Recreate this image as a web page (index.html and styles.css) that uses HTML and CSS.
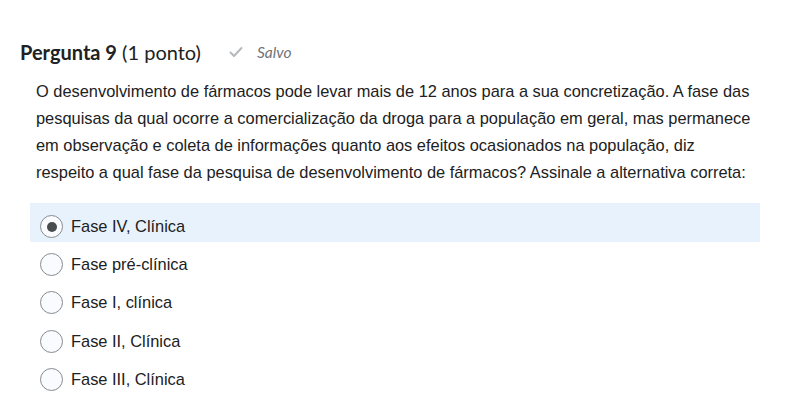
FILE: index.html
```html
<!DOCTYPE html>
<html lang="pt">
<head>
<meta charset="utf-8">
<link rel="stylesheet" href="styles.css">
</head>
<body>
<div class="question">
  <div class="q-header">
    <h2 class="q-title"><strong>Pergunta 9</strong> <span class="pts">(1 ponto)</span></h2>
    <span class="saved">
      <svg class="check" width="14" height="12" viewBox="0 0 14 12"><path d="M1.5 6.5 L5 10 L12.5 2" fill="none" stroke="#b5b9bc" stroke-width="2" stroke-linecap="round" stroke-linejoin="round"/></svg>
      <em>Salvo</em>
    </span>
  </div>
  <p class="q-text">O desenvolvimento de fármacos pode levar mais de 12 anos para a sua concretização. A fase das pesquisas da qual ocorre a comercialização da droga para a população em geral, mas permanece em observação e coleta de informações quanto aos efeitos ocasionados na população, diz respeito a qual fase da pesquisa de desenvolvimento de fármacos? Assinale a alternativa correta:</p>
  <div class="options">
    <label class="opt selected"><span class="radio checked"></span><span>Fase IV, Clínica</span></label>
    <label class="opt"><span class="radio"></span><span>Fase pré-clínica</span></label>
    <label class="opt"><span class="radio"></span><span>Fase I, clínica</span></label>
    <label class="opt"><span class="radio"></span><span>Fase II, Clínica</span></label>
    <label class="opt"><span class="radio"></span><span>Fase III, Clínica</span></label>
  </div>
</div>
</body>
</html>
```
FILE: styles.css
```css
html, body { margin: 0; padding: 0; background: #fff; }
body { font-family: "Liberation Sans", Arial, sans-serif; color: #202122; }
.question { padding: 39px 0 0 20px; width: 740px; }
.q-header { display: flex; align-items: center; height: 26px; }
.q-title { margin: 0; font-family: Lato, "Noto Sans", sans-serif; font-size: 20px; font-weight: 400; color: #202122; }
.q-title strong { font-weight: 700; }
.pts { color: #202122; }
.saved { display: flex; align-items: center; margin-left: 28px; font-family: Lato, sans-serif; font-size: 15.5px; color: #6e7477; }
.check { margin-right: 14px; }
.saved em { font-style: italic; }
.q-text { margin: 13px 0 0 16px; width: 719px; font-size: 16.4px; line-height: 27px; color: #202122; }
.options { margin: 17px 0 0 10px; display: flex; flex-direction: column; }
.opt { display: flex; align-items: center; height: 38.4px; padding: 7.5px 0 0 10px; box-sizing: border-box; font-size: 16.4px; color: #202122; }
.opt.selected { background: #e8f2fc; height: 39px; padding-top: 8px; margin-bottom: -0.6px; }
.radio { width: 23px; height: 23px; box-sizing: border-box; border: 1px solid #868c8f; border-radius: 50%; background: #f9fbff; margin-right: 8px; display: flex; align-items: center; justify-content: center; }
.radio.checked::after { content: ""; width: 10px; height: 10px; border-radius: 50%; background: #494c4e; }
```
